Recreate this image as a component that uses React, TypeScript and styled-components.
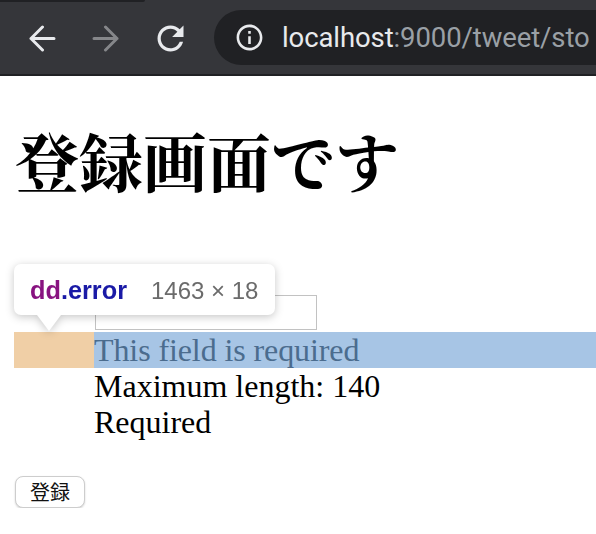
import styled, { createGlobalStyle } from "styled-components";

const GlobalStyle = createGlobalStyle`
  html, body {
    margin: 0;
    padding: 0;
    background: #ffffff;
    overflow: hidden;
  }
`;

const BackIcon = ({ color }: { color: string }) => (
  <svg width="28" height="28" viewBox="0 0 28 28" fill="none">
    <path
      d="M26 14.5H3M14.5 3L3 14.5L14.5 26"
      stroke={color}
      strokeWidth="3"
      strokeLinecap="round"
      strokeLinejoin="round"
    />
  </svg>
);

const ForwardIcon = ({ color }: { color: string }) => (
  <svg width="28" height="28" viewBox="0 0 28 28" fill="none">
    <path
      d="M2 14.5H25M13.5 3L25 14.5L13.5 26"
      stroke={color}
      strokeWidth="3"
      strokeLinecap="round"
      strokeLinejoin="round"
    />
  </svg>
);

const ReloadIcon = () => (
  <svg width="39" height="39" viewBox="0 0 24 24">
    <path
      fill="#e8eaed"
      d="M17.65 6.35C16.2 4.9 14.21 4 12 4c-4.42 0-7.99 3.58-7.99 8s3.57 8 7.99 8c3.73 0 6.84-2.55 7.73-6h-2.08c-.82 2.33-3.04 4-5.65 4-3.31 0-6-2.69-6-6s2.69-6 6-6c1.66 0 3.14.69 4.22 1.78L13 11h7V4l-2.35 2.35z"
    />
  </svg>
);

const InfoIcon = () => (
  <svg width="31" height="31" viewBox="0 0 24 24">
    <path
      fill="#e8eaed"
      d="M11 7h2v2h-2zm0 4h2v6h-2zm1-9C6.48 2 2 6.48 2 12s4.48 10 10 10 10-4.48 10-10S17.52 2 12 2zm0 18c-4.41 0-8-3.59-8-8s3.59-8 8-8 8 3.59 8 8-3.59 8-8 8z"
    />
  </svg>
);

const App = (): JSX.Element => {
  return (
    <>
      <GlobalStyle />
      <Browser>
        <TabStrip>
          <TabEdge />
        </TabStrip>
        <Toolbar>
          <NavButton>
            <BackIcon color="#e8eaed" />
          </NavButton>
          <NavButton>
            <ForwardIcon color="#86878a" />
          </NavButton>
          <NavButton>
            <ReloadIcon />
          </NavButton>
          <Omnibox>
            <InfoIcon />
            <Url>
              localhost<span className="rest">:9000/tweet/sto</span>
            </Url>
          </Omnibox>
        </Toolbar>
      </Browser>

      <Page>
        <Title>登録画面です</Title>

        <Form>
          <InputRow>
            <TextInput type="text" />
          </InputRow>
          <ErrorRow>
            <MarginBox />
            <ErrorText>This field is required</ErrorText>
          </ErrorRow>
          <RuleText>Maximum length: 140</RuleText>
          <RuleText>Required</RuleText>
          <SubmitButton type="button">登録</SubmitButton>
        </Form>

        <Tooltip>
          <span className="tag">dd</span>
          <span className="cls">.error</span>
          <span className="size">1463 × 18</span>
        </Tooltip>
      </Page>
    </>
  );
};

export default App;

const Browser = styled.header`
  background: #35363a;
  border-bottom: 2px solid #202124;
`;

const TabStrip = styled.div`
  height: 2px;
  display: flex;
`;

const TabEdge = styled.div`
  width: 145px;
  background: #202124;
  border-bottom-right-radius: 2px;
`;

const Toolbar = styled.div`
  height: 72px;
  display: flex;
  align-items: center;
  padding-left: 28px;
  gap: 36px;
  overflow: hidden;
`;

const NavButton = styled.div`
  width: 28px;
  height: 28px;
  display: flex;
  align-items: center;
  justify-content: center;
  flex-shrink: 0;

  & svg {
    flex-shrink: 0;
  }
`;

const Omnibox = styled.div`
  margin-left: -6px;
  height: 55px;
  margin-top: -1px;
  flex: 1 0 auto;
  background: #202124;
  border-radius: 28px 0 0 28px;
  display: flex;
  align-items: center;
  padding-left: 20px;
  gap: 17px;
  white-space: nowrap;

  & svg {
    flex-shrink: 0;
  }
`;

const Url = styled.div`
  font-family: Roboto, "Liberation Sans", sans-serif;
  font-size: 27.5px;
  color: #e8eaed;
  letter-spacing: -0.1px;

  & .rest {
    color: #9aa0a6;
  }
`;

const Page = styled.main`
  position: relative;
  padding: 16px 0 0 14px;
`;

const Title = styled.h1`
  margin: 37px 0 0 1px;
  font-family: "Liberation Serif", "Noto Serif CJK JP", "Noto Sans CJK JP", serif;
  font-size: 64px;
  line-height: 74px;
  font-weight: 700;
  color: #000;
`;

const Form = styled.form`
  margin-top: 92px;
  font-family: "Liberation Serif", "Noto Sans CJK JP", serif;
  font-size: 32px;
  color: #000;
`;

const InputRow = styled.div`
  padding-left: 81px;
  height: 37px;
`;

const TextInput = styled.input`
  display: block;
  box-sizing: border-box;
  width: 222px;
  height: 35px;
  margin: 0;
  border: 1px solid #c2c2c2;
  background: #fff;
`;

const ErrorRow = styled.div`
  display: flex;
  height: 36px;
`;

const MarginBox = styled.div`
  width: 80px;
  flex-shrink: 0;
  background: #f0cfa6;
`;

const ErrorText = styled.div`
  flex: 1;
  background: #a7c5e5;
  color: #4b6c8e;
  line-height: 36px;
  white-space: nowrap;
  letter-spacing: -0.1px;
`;

const RuleText = styled.div`
  padding-left: 80px;
  line-height: 36px;
`;

const SubmitButton = styled.button`
  display: block;
  margin: 36px 0 0 1px;
  width: 70px;
  height: 32px;
  padding: 0;
  background: #fff;
  border: 1px solid #cdcdcd;
  border-radius: 8px;
  box-shadow: 0 1px 2px rgba(0, 0, 0, 0.18);
  font-family: "Noto Sans CJK JP", sans-serif;
  font-size: 20px;
  line-height: 30px;
  color: #111;
`;

const Tooltip = styled.div`
  position: absolute;
  left: 14px;
  top: 188px;
  box-sizing: border-box;
  height: 51px;
  padding: 2px 17px 0 16px;
  display: flex;
  align-items: center;
  background: #fff;
  border-radius: 7px;
  filter: drop-shadow(0 2px 4px rgba(0, 0, 0, 0.22));
  font-family: "Liberation Sans", Arial, sans-serif;
  font-size: 24px;
  white-space: nowrap;

  &::after {
    content: "";
    position: absolute;
    left: 23px;
    top: 100%;
    border-left: 12px solid transparent;
    border-right: 12px solid transparent;
    border-top: 16px solid #fff;
  }

  & .tag,
  & .cls {
    font-size: 25.3px;
    font-weight: 700;
  }

  & .tag {
    color: #881280;
  }

  & .cls {
    color: #1a1aa6;
  }

  & .size {
    margin-left: 24px;
    color: #6b6b6b;
  }
`;
